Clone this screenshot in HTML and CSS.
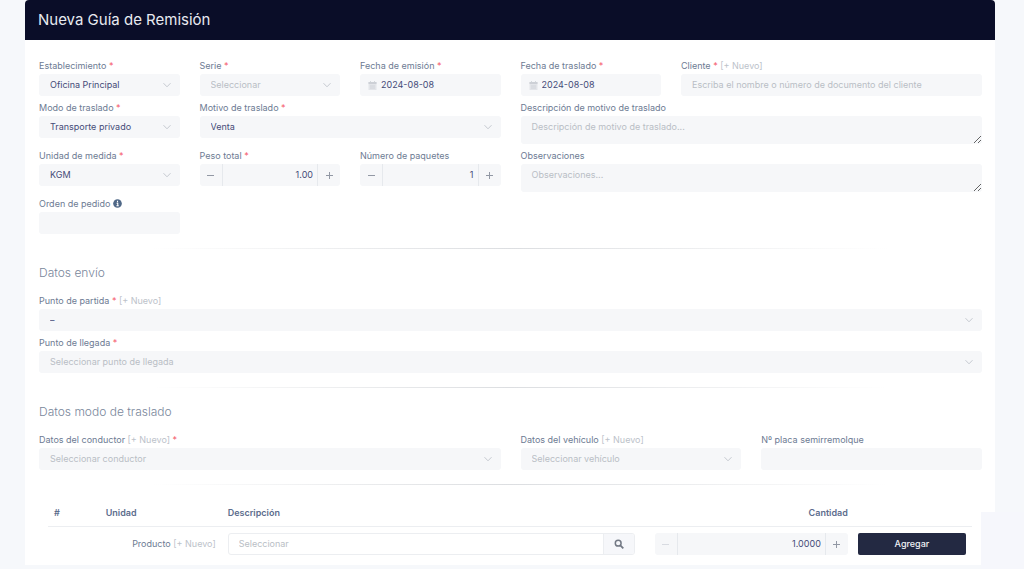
FILE: index.html
```html
<!DOCTYPE html>
<html lang="es">
<head>
<meta charset="utf-8">
<meta name="viewport" content="width=device-width, initial-scale=1">
<title>Nueva Guía de Remisión</title>
<link rel="stylesheet" href="styles.css">
</head>
<body>
<svg class="sprite" aria-hidden="true">
  <symbol id="chevron" viewBox="0 0 10 10"><path d="M1.5 3.2 5 6.8 8.500 3.200" fill="none" stroke="currentColor"/></symbol>
  <symbol id="calendar" viewBox="0 0 9 9"><path d="M.5 1h8v8h-8z" fill="#e3e5e9"/><path d="M.5 1h8v2h-8z" fill="currentColor"/><path d="M2.500 0v2M6.500 0v2M2 5h5M2 7h5" stroke="currentColor" stroke-width=".8"/></symbol>
  <symbol id="minus" viewBox="0 0 9 9"><path d="M1 4.500h7" stroke="currentColor"/></symbol>
  <symbol id="plus" viewBox="0 0 9 9"><path d="M1 4.500h7M4.500 1v7" stroke="currentColor"/></symbol>
</svg>
<main class="card">
  <header class="card-header"><h1 class="title">Nueva Guía de Remisión</h1></header>
  <form class="card-body">
    <div class="grid">
      <div class="field span-2">
        <div class="caption"><label for="establecimiento">Establecimiento</label> <span class="required">*</span></div>
        <div class="select"><select id="establecimiento"><option>Oficina Principal</option></select><svg class="chevron"><use href="#chevron"/></svg></div>
      </div>
      <div class="field span-2">
        <div class="caption"><label for="serie">Serie</label> <span class="required">*</span></div>
        <div class="select"><select id="serie" class="empty"><option>Seleccionar</option></select><svg class="chevron"><use href="#chevron"/></svg></div>
      </div>
      <div class="field span-2">
        <div class="caption"><label for="emision">Fecha de emisión</label> <span class="required">*</span></div>
        <div class="date"><svg class="calendar"><use href="#calendar"/></svg><input id="emision" type="text" value="2024-08-08"></div>
      </div>
      <div class="field span-2">
        <div class="caption"><label for="fecha-traslado">Fecha de traslado</label> <span class="required">*</span></div>
        <div class="date"><svg class="calendar"><use href="#calendar"/></svg><input id="fecha-traslado" type="text" value="2024-08-08"></div>
      </div>
      <div class="field span-4">
        <div class="caption"><label for="cliente">Cliente</label> <span class="required">*</span> <a class="new" href="#">[+ Nuevo]</a></div>
        <input class="control" id="cliente" type="text" placeholder="Escriba el nombre o número de documento del cliente">
      </div>

      <div class="field span-2">
        <div class="caption"><label for="modo">Modo de traslado</label> <span class="required">*</span></div>
        <div class="select"><select id="modo"><option>Transporte privado</option></select><svg class="chevron"><use href="#chevron"/></svg></div>
      </div>
      <div class="field span-4">
        <div class="caption"><label for="motivo">Motivo de traslado</label> <span class="required">*</span></div>
        <div class="select"><select id="motivo"><option>Venta</option></select><svg class="chevron"><use href="#chevron"/></svg></div>
      </div>
      <div class="field span-6">
        <div class="caption"><label for="descripcion">Descripción de motivo de traslado</label></div>
        <textarea class="control" id="descripcion" placeholder="Descripción de motivo de traslado..."></textarea>
      </div>

      <div class="field span-2">
        <div class="caption"><label for="unidad">Unidad de medida</label> <span class="required">*</span></div>
        <div class="select"><select id="unidad"><option>KGM</option></select><svg class="chevron"><use href="#chevron"/></svg></div>
      </div>
      <div class="field span-2">
        <div class="caption"><label for="peso">Peso total</label> <span class="required">*</span></div>
        <div class="stepper"><button type="button" aria-label="Disminuir peso"><svg><use href="#minus"/></svg></button><input id="peso" type="text" value="1.00"><button type="button" aria-label="Aumentar peso"><svg><use href="#plus"/></svg></button></div>
      </div>
      <div class="field span-2">
        <div class="caption"><label for="paquetes">Número de paquetes</label></div>
        <div class="stepper"><button type="button" aria-label="Disminuir paquetes"><svg><use href="#minus"/></svg></button><input id="paquetes" type="text" value="1"><button type="button" aria-label="Aumentar paquetes"><svg><use href="#plus"/></svg></button></div>
      </div>
      <div class="field span-6">
        <div class="caption"><label for="observaciones">Observaciones</label></div>
        <textarea class="control" id="observaciones" placeholder="Observaciones..."></textarea>
      </div>

      <div class="field span-2">
        <div class="caption"><label for="orden">Orden de pedido</label>
          <svg class="info" viewBox="0 0 10 10"><circle cx="5" cy="5" r="4.800" fill="currentColor"/><path d="M5 2v1.500M4 4.700h1.300v2.600M3.800 7.500h2.600" fill="none" stroke="#fff" stroke-width="1.200"/></svg></div>
        <input class="control" id="orden" type="text">
      </div>
    </div>

    <hr class="divider">
    <h2 class="section-title">Datos envío</h2>
    <div class="grid">
      <div class="field span-12">
        <div class="caption"><label for="partida">Punto de partida</label> <span class="required">*</span> <a class="new" href="#">[+ Nuevo]</a></div>
        <div class="select"><select id="partida"><option>–</option></select><svg class="chevron"><use href="#chevron"/></svg></div>
      </div>
      <div class="field span-12">
        <div class="caption"><label for="llegada">Punto de llegada</label> <span class="required">*</span></div>
        <div class="select"><select id="llegada" class="empty"><option>Seleccionar punto de llegada</option></select><svg class="chevron"><use href="#chevron"/></svg></div>
      </div>
    </div>

    <hr class="divider">
    <h2 class="section-title">Datos modo de traslado</h2>
    <div class="grid">
      <div class="field span-6">
        <div class="caption"><label for="conductor">Datos del conductor</label> <a class="new" href="#">[+ Nuevo]</a> <span class="required">*</span></div>
        <div class="select"><select id="conductor" class="empty"><option>Seleccionar conductor</option></select><svg class="chevron"><use href="#chevron"/></svg></div>
      </div>
      <div class="field span-3">
        <div class="caption"><label for="vehiculo">Datos del vehículo</label> <a class="new" href="#">[+ Nuevo]</a></div>
        <div class="select"><select id="vehiculo" class="empty"><option>Seleccionar vehículo</option></select><svg class="chevron"><use href="#chevron"/></svg></div>
      </div>
      <div class="field span-3">
        <div class="caption"><label for="placa">Nº placa semirremolque</label></div>
        <input class="control" id="placa" type="text">
      </div>
    </div>

    <hr class="divider">
    <table class="items">
      <colgroup><col class="col-number"><col class="col-unit"><col class="col-description"><col class="col-quantity"><col class="col-action"></colgroup>
      <thead>
        <tr><th>#</th><th>Unidad</th><th>Descripción</th><th class="right quantity">Cantidad</th><td></td></tr>
      </thead>
      <tbody>
        <tr>
          <td colspan="2" class="right"><label for="producto">Producto</label> <a class="new" href="#">[+ Nuevo]</a></td>
          <td class="product"><div class="search"><input id="producto" type="text" placeholder="Seleccionar"><button type="button" aria-label="Buscar producto"><svg viewBox="0 0 10 10"><circle cx="4.200" cy="4.200" r="2.900" fill="none" stroke="currentColor" stroke-width="1.500"/><path d="m6.300 6.300 3 3" stroke="currentColor" stroke-width="1.800"/></svg></button></div></td>
          <td class="quantity"><div class="stepper"><button type="button" disabled aria-label="Disminuir cantidad"><svg><use href="#minus"/></svg></button><input type="text" value="1.0000" aria-label="Cantidad"><button type="button" aria-label="Aumentar cantidad"><svg><use href="#plus"/></svg></button></div></td>
          <td><button class="add" type="button">Agregar</button></td>
        </tr>
      </tbody>
    </table>
  </form>
</main>
<aside class="corner-panel"></aside>
</body>
</html>
```
FILE: styles.css
```css
* {
  box-sizing: border-box;
}

body {
  margin: 0;
  padding: 0 29px 4px 25px;
  background: #f6f8fb;
  color: #6d7b93;
  font: 9px/16px Inter, "Open Sans", sans-serif;
}

input, select, textarea, button {
  min-width: 0;
  margin: 0;
  border: 0;
  border-radius: 0;
  background: transparent;
  color: #454b78;
  font: inherit;
}

::placeholder {
  color: #b9bec5;
  opacity: 1;
}

.sprite {
  position: absolute;
  width: 0;
  height: 0;
}

.card {
  overflow: hidden;
  border-radius: 4px 4px 0 0;
  background: #fff;
}

.card-header {
  padding: 10px 13px;
  background: #0a0d28;
}

.title {
  margin: 0;
  color: #e8eaf0;
  font-size: 15px;
  font-weight: 400;
  line-height: 20px;
}

.card-body {
  padding: 18px 13px 4px 14px;
}

.grid {
  display: grid;
  grid-template-columns: repeat(12, minmax(0, 1fr));
  gap: 4px 20px;
}

.span-2 { grid-column: span 2; }
.span-3 { grid-column: span 3; }
.span-4 { grid-column: span 4; }
.span-6 { grid-column: span 6; }
.span-12 { grid-column: span 12; }

.caption {
  height: 16px;
  white-space: nowrap;
}

.required {
  color: #f5586a;
}

.new {
  color: #bcc2ca;
  text-decoration: none;
}

.info {
  width: 9px;
  height: 9px;
  color: #4f6887;
  vertical-align: -1px;
}

.control, .select, .date, .stepper {
  width: 100%;
  height: 22px;
  border-radius: 3px;
  background: #f6f7f9;
}

.control {
  display: block;
  padding: 0 11px 1px;
}

textarea.control {
  height: 28px;
  padding: 3px 11px;
  resize: vertical;
}

.select {
  display: grid;
  align-items: center;
}

.select > * {
  grid-area: 1 / 1;
}

.select select {
  width: 100%;
  height: 22px;
  padding: 0 24px 0 11px;
  appearance: none;
}

.select .empty {
  color: #b9bec5;
}

.chevron {
  justify-self: end;
  width: 10px;
  height: 10px;
  margin-right: 8px;
  color: #c6cad1;
  pointer-events: none;
}

.date {
  display: flex;
  align-items: center;
  gap: 4px;
  padding: 0 8px;
}

.date input {
  flex: 1;
  padding: 0;
}

.calendar {
  width: 9px;
  height: 9px;
  color: #cdd0d6;
}

.stepper {
  display: flex;
}

.stepper input {
  flex: 1;
  padding: 0 4px;
  border: solid #e6e9ed;
  border-width: 0 1px;
  text-align: right;
}

.stepper button {
  display: grid;
  flex: 0 0 22px;
  place-items: center;
  padding: 0;
  color: #9298a4;
}

.stepper button:disabled {
  color: #d8dbe1;
}

.stepper svg {
  width: 9px;
  height: 9px;
}

.divider {
  height: 1px;
  margin: 14px 0 16px;
  border: 0;
  background: linear-gradient(90deg, transparent 12%, #dcdee1 50%, transparent 90%);
}

.section-title {
  margin: 0 0 12px;
  color: #7a879b;
  font-size: 12px;
  font-weight: 300;
  line-height: 16px;
}

.items {
  width: calc(100% - 19px);
  margin: 0 10px 0 9px;
  border-collapse: collapse;
  table-layout: fixed;
}

.col-number { width: 5.6%; }
.col-unit { width: 13.2%; }
.col-description { width: 46.2%; }
.col-quantity { width: 22%; }
.col-action { width: 13%; }

.items th {
  padding: 4px 6px 5px;
  border-bottom: 1px solid #eceef1;
  color: #5d6d8d;
  font-weight: 600;
  text-align: left;
}

.items td {
  padding: 6px;
}

.items thead td {
  padding: 0;
  border-bottom: 1px solid #eceef1;
}

.items .right {
  text-align: right;
}

.items .product {
  padding-right: 14px;
}

.items .quantity {
  padding-right: 4px;
}

.search {
  display: flex;
  height: 22px;
  overflow: hidden;
  border: 1px solid #eceef1;
  border-radius: 3px;
}

.search input {
  flex: 1;
  padding: 0 10px;
}

.search button {
  display: grid;
  flex: 0 0 31px;
  place-items: center;
  padding: 0;
  border-left: 1px solid #eceef1;
  background: #f6f7fa;
  color: #737984;
}

.search svg {
  width: 10px;
  height: 10px;
}

.add {
  display: block;
  width: 100%;
  height: 22px;
  border-radius: 2px;
  background: #232942;
  color: #f0f1f5;
  font-weight: 500;
}

.corner-panel {
  position: fixed;
  right: 0;
  bottom: 0;
  width: 43px;
  height: 57px;
  background: #f6f7fc;
}
```
